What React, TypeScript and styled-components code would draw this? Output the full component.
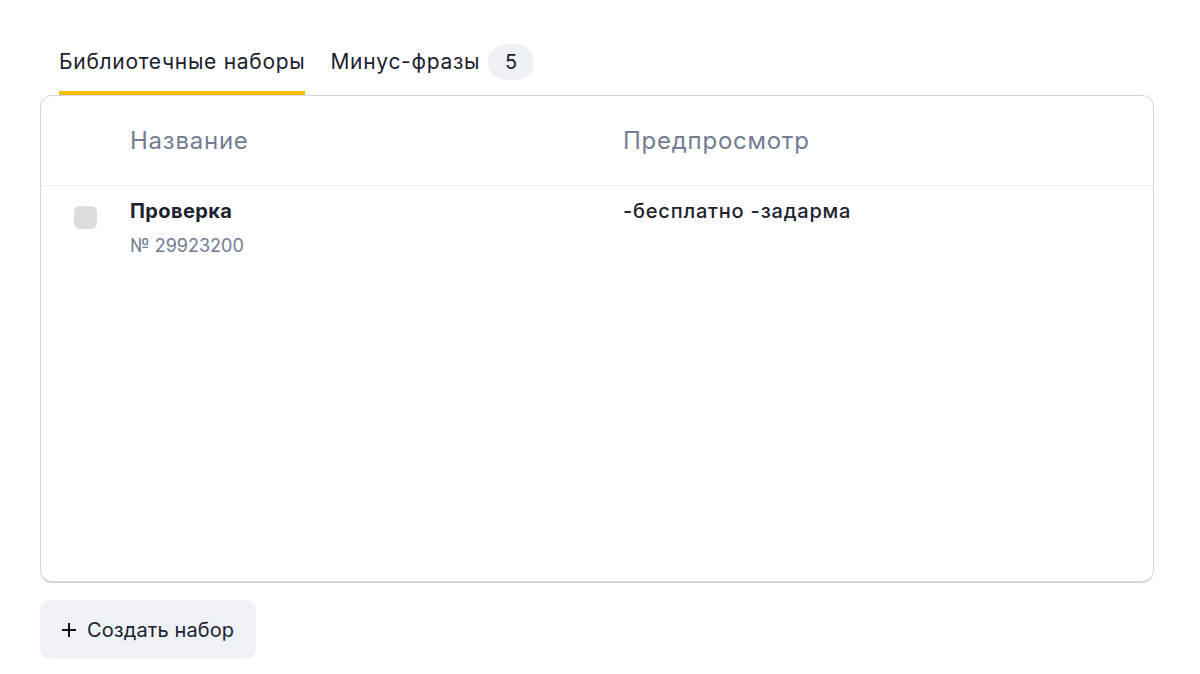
import React from "react";
import styled, { createGlobalStyle } from "styled-components";

const Global = createGlobalStyle`
  html, body { margin: 0; padding: 0; background: #fff; }
  body { font-family: Inter, "Noto Sans", sans-serif; color: #1c2230; -webkit-font-smoothing: antialiased; }
`;

const Page = styled.div`
  padding: 44px 46px 0 40px;
  display: flex;
  flex-direction: column;
`;

const TabList = styled.div`
  display: flex;
  align-items: flex-end;
  gap: 25px;
  padding-left: 19px;
  height: 51px;
`;

const Tab = styled.div<{ $active?: boolean }>`
  display: flex;
  align-items: center;
  gap: 8px;
  height: 51px;
  box-sizing: border-box;
  padding-bottom: 12px;
  font-size: 21px;
  letter-spacing: 0.7px;
  color: #1c2230;
  border-bottom: 4px solid ${(p) => (p.$active ? "#f5c000" : "transparent")};
`;

const Badge = styled.span`
  display: inline-flex;
  align-items: center;
  justify-content: center;
  min-width: 46px;
  height: 36px;
  border-radius: 18px;
  background: #eef1f6;
  font-size: 20px;
  letter-spacing: 0;
  color: #1c2230;
`;

const Card = styled.div`
  height: 488px;
  box-sizing: border-box;
  border: 1px solid #d3d7e2;
  border-bottom-width: 2px;
  border-radius: 12px;
  display: flex;
  flex-direction: column;
`;

const Grid = styled.div`
  display: grid;
  grid-template-columns: 89px 493px 1fr;
`;

const HeadRow = styled(Grid)`
  height: 89px;
  align-items: center;
  border-bottom: 1px solid #edeff3;
`;

const HeadCell = styled.div`
  font-size: 24px;
  letter-spacing: 0.75px;
  color: #737d93;
`;

const BodyRow = styled(Grid)`
  padding-top: 12px;
`;

const CheckCell = styled.div`
  display: flex;
  justify-content: flex-end;
  padding-right: 33px;
  padding-top: 8px;
`;

const Checkbox = styled.div`
  width: 23px;
  height: 23px;
  border-radius: 6px;
  background: #dcdcdc;
`;

const Name = styled.div`
  font-size: 20px;
  font-weight: 700;
  letter-spacing: 0.4px;
  color: #1c2230;
  line-height: 26px;
`;

const Sub = styled.div`
  margin-top: 9px;
  font-size: 18px;
  color: #737d93;
  line-height: 26px;
`;

const Preview = styled.div`
  font-size: 20px;
  font-weight: 500;
  letter-spacing: 0.8px;
  color: #1c2230;
  line-height: 26px;
`;

const Button = styled.button`
  margin-top: 17px;
  align-self: flex-start;
  display: inline-flex;
  align-items: center;
  gap: 11px;
  height: 59px;
  padding: 0 22px 0 22px;
  border: none;
  border-radius: 10px;
  background: #eff2f7;
  font-family: inherit;
  font-size: 20px;
  letter-spacing: 0.1px;
  color: #1c2230;
  cursor: pointer;
`;

export default function App() {
  return (
    <>
      <Global />
      <Page>
        <TabList>
          <Tab $active>Библиотечные наборы</Tab>
          <Tab>
            Минус-фразы <Badge>5</Badge>
          </Tab>
        </TabList>
        <Card>
          <HeadRow>
            <div />
            <HeadCell>Название</HeadCell>
            <HeadCell>Предпросмотр</HeadCell>
          </HeadRow>
          <BodyRow>
            <CheckCell>
              <Checkbox />
            </CheckCell>
            <div>
              <Name>Проверка</Name>
              <Sub>№ 29923200</Sub>
            </div>
            <Preview>-бесплатно -задарма</Preview>
          </BodyRow>
        </Card>
        <Button>
          <svg width="14" height="14" viewBox="0 0 14 14">
            <path d="M7 0v14M0 7h14" stroke="#111" strokeWidth="2" />
          </svg>
          Создать набор
        </Button>
      </Page>
    </>
  );
}
